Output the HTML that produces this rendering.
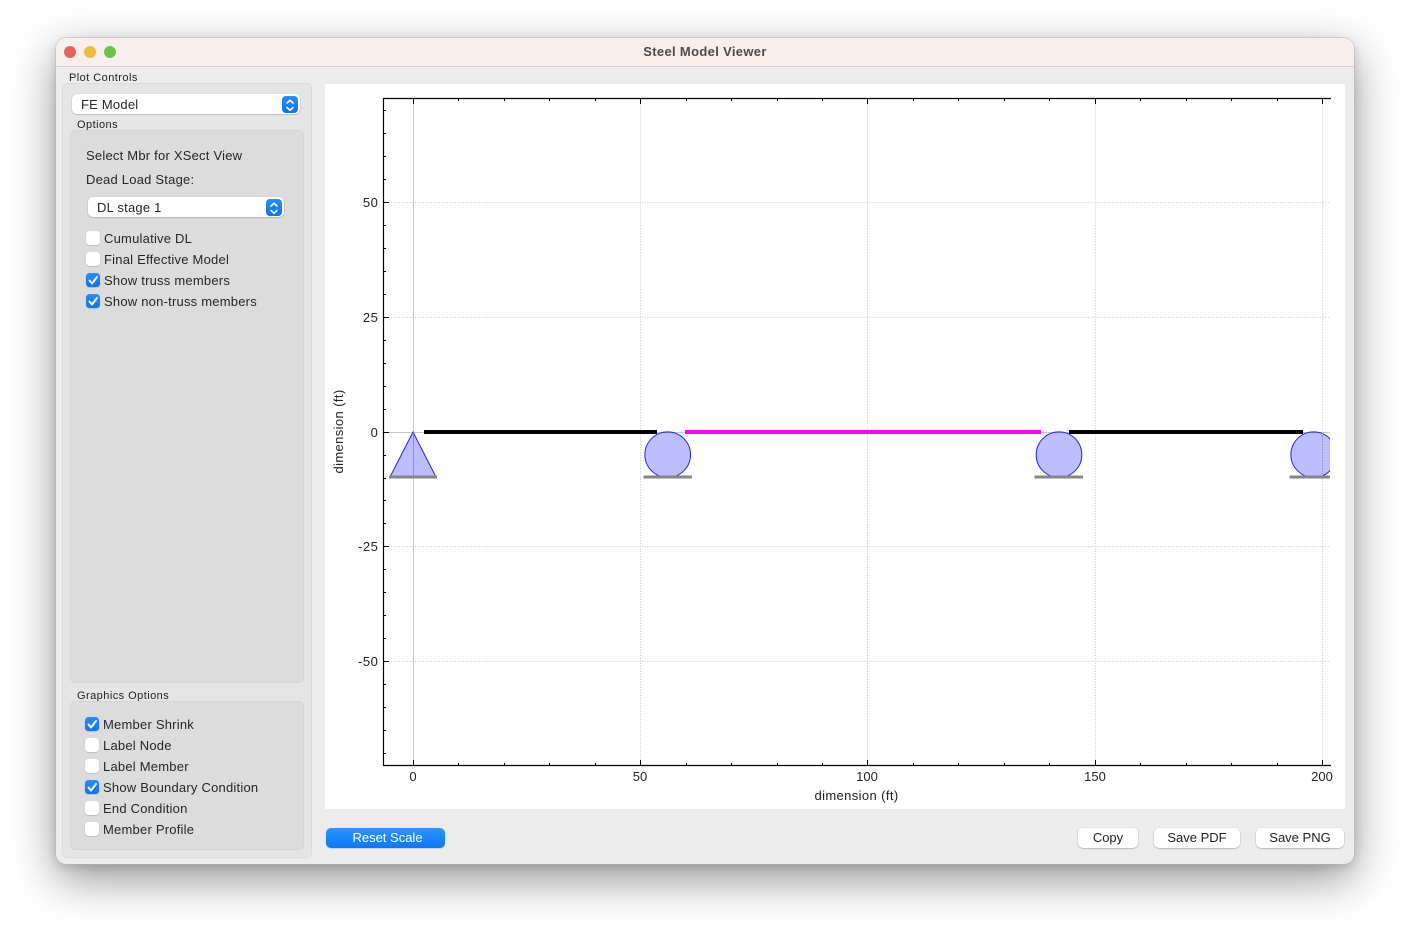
<!DOCTYPE html>
<html>
<head>
<meta charset="utf-8">
<style>
html,body{margin:0;padding:0;width:1410px;height:938px;background:#fff;overflow:hidden;font-family:"Liberation Sans",sans-serif;color:#222}
div,span{position:absolute;box-sizing:border-box}
#win{left:56px;top:38px;width:1298px;height:826px;border-radius:10px;background:#ececec;box-shadow:0 0 0 .5px #b5b5b5,0 15px 46px rgba(0,0,0,.42),0 3px 10px rgba(0,0,0,.14)}
#tbar{left:56px;top:38px;width:1298px;height:29px;border-radius:10px 10px 0 0;background:#f8eeec;border-bottom:1px solid #d2cfce}
#title{left:56px;width:1298px;top:44px;text-align:center;font-size:13px;font-weight:bold;color:#4c4a4a;line-height:15px;letter-spacing:.33px}
.dot{width:12px;height:12px;border-radius:50%;top:46px}
.t{font-size:13px;line-height:16px;white-space:nowrap;color:#262626;letter-spacing:.22px}
.s{font-size:11px;line-height:13px;white-space:nowrap;color:#222;letter-spacing:.45px}
.grp{border:1px solid #dadada;border-radius:5px}
.pop{background:#fff;border-radius:5px;height:20px;box-shadow:0 .5px 1.5px rgba(0,0,0,.3)}
.step{width:16px;height:17px;border-radius:4px;background:linear-gradient(#2a8dff,#0a74f5)}
.cb{width:14px;height:14px;border-radius:3.5px;background:#fff;box-shadow:0 .5px 1px rgba(0,0,0,.25)}
.cb.on{background:linear-gradient(#2a8dff,#0a74f5)}
.btn{height:20px;background:#fff;border-radius:5px;box-shadow:0 .5px 1.5px rgba(0,0,0,.38);text-align:center;font-size:13px;line-height:20px;color:#222}
svg{position:absolute;left:0;top:0}
</style>
</head>
<body>
<div id="win"></div>
<div id="tbar"></div>
<div class="dot" style="left:64px;background:#e5645a"></div>
<div class="dot" style="left:84px;background:#eebb3f"></div>
<div class="dot" style="left:104px;background:#6cc24a"></div>
<div id="title">Steel Model Viewer</div>

<div class="s" style="left:69px;top:72px">Plot Controls</div>
<div class="grp" style="left:62px;top:83px;width:250px;height:775px;background:#e5e5e5"></div>
<div class="pop" style="left:72px;top:94px;width:228px"></div>
<div class="t" style="left:81px;top:97px">FE Model</div>
<div class="step" style="left:282px;top:96px"></div>
<div class="s" style="left:77px;top:119px">Options</div>
<div class="grp" style="left:70px;top:130px;width:234px;height:553px;background:#dcdcdc;border-color:#d4d4d4"></div>
<div class="t" style="left:86px;top:148px">Select Mbr for XSect View</div>
<div class="t" style="left:86px;top:172px">Dead Load Stage:</div>
<div class="pop" style="left:88px;top:197px;width:196px"></div>
<div class="t" style="left:97px;top:200px">DL stage 1</div>
<div class="step" style="left:266px;top:199px"></div>

<div class="cb" style="left:86px;top:231px"></div><div class="t" style="left:104px;top:231px">Cumulative DL</div>
<div class="cb" style="left:86px;top:252px"></div><div class="t" style="left:104px;top:252px">Final Effective Model</div>
<div class="cb on" style="left:86px;top:273px"></div><div class="t" style="left:104px;top:273px">Show truss members</div>
<div class="cb on" style="left:86px;top:294px"></div><div class="t" style="left:104px;top:294px">Show non-truss members</div>

<div class="s" style="left:77px;top:690px">Graphics Options</div>
<div class="grp" style="left:70px;top:701px;width:234px;height:149px;background:#dcdcdc;border-color:#d4d4d4"></div>
<div class="cb on" style="left:85px;top:717px"></div><div class="t" style="left:103px;top:717px">Member Shrink</div>
<div class="cb" style="left:85px;top:738px"></div><div class="t" style="left:103px;top:738px">Label Node</div>
<div class="cb" style="left:85px;top:759px"></div><div class="t" style="left:103px;top:759px">Label Member</div>
<div class="cb on" style="left:85px;top:780px"></div><div class="t" style="left:103px;top:780px">Show Boundary Condition</div>
<div class="cb" style="left:85px;top:801px"></div><div class="t" style="left:103px;top:801px">End Condition</div>
<div class="cb" style="left:85px;top:822px"></div><div class="t" style="left:103px;top:822px">Member Profile</div>

<div style="left:325px;top:84px;width:1020px;height:725px;background:#fff"></div>

<div class="btn" style="left:326px;top:828px;width:119px;padding-left:4px;background:linear-gradient(#2c95ff,#0a78fb);color:#fff;box-shadow:0 .5px 1px rgba(0,0,0,.25)">Reset Scale</div>
<div class="btn" style="left:1078px;top:828px;width:60px">Copy</div>
<div class="btn" style="left:1154px;top:828px;width:86px">Save PDF</div>
<div class="btn" style="left:1256px;top:828px;width:88px">Save PNG</div>

<svg width="1410" height="938" viewBox="0 0 1410 938" style="font-family:'Liberation Sans',sans-serif">
<defs><clipPath id="c"><rect x="383" y="98" width="947" height="668"/></clipPath></defs>
<!-- stepper arrows -->
<g fill="none" stroke="#fff" stroke-width="1.6" stroke-linecap="round" stroke-linejoin="round">
<path d="M287 103l3-2.800 3 2.800M287 107.500l3 2.800 3-2.800"/>
<path d="M271 206l3-2.800 3 2.800M271 210.500l3 2.800 3-2.800"/>
</g>
<!-- check marks -->
<g fill="none" stroke="#fff" stroke-width="2" stroke-linecap="round" stroke-linejoin="round">
<path d="M89.500 280.500l2.500 3 5-6.500"/>
<path d="M89.500 301.500l2.500 3 5-6.500"/>
<path d="M88.500 724.500l2.500 3 5-6.500"/>
<path d="M88.500 787.500l2.500 3 5-6.500"/>
</g>
<!-- grid -->
<g stroke="#c8c8c8" stroke-width="1" stroke-dasharray="1 1.670" fill="none">
<path d="M391 202.500H1330M391 317.500H1330M391 546.500H1330M391 661.500H1330"/>
<path d="M640.500 105V760M867.500 105V760M1095.500 105V760M1322.500 105V760"/>
</g>
<path d="M413.500 103V760M389 432.500H1330" stroke="#c8c8c8" stroke-width="1" fill="none"/>
<!-- axes -->
<path d="M383.500 98.500H1331M383.500 98V766M383 765.500H1331" stroke="#000" stroke-width="1.200" fill="none"/>
<!-- major ticks -->
<path d="M413.500 98v6M640.500 98v6M867.500 98v6M1095.500 98v6M1322.500 98v6M413.500 766v-6M640.500 766v-6M867.500 766v-6M1095.500 766v-6M1322.500 766v-6M383 202.500h6M383 317.500h6M383 432.500h6M383 546.500h6M383 661.500h6" stroke="#000" stroke-width="1" fill="none"/>
<!-- minor ticks -->
<path d="M458.500 98v3M504.500 98v3M549.500 98v3M595.500 98v3M686.500 98v3M731.500 98v3M777.500 98v3M822.500 98v3M913.500 98v3M958.500 98v3M1004.500 98v3M1049.500 98v3M1140.500 98v3M1186.500 98v3M1231.500 98v3M1277.500 98v3M458.500 766v-3M504.500 766v-3M549.500 766v-3M595.500 766v-3M686.500 766v-3M731.500 766v-3M777.500 766v-3M822.500 766v-3M913.500 766v-3M958.500 766v-3M1004.500 766v-3M1049.500 766v-3M1140.500 766v-3M1186.500 766v-3M1231.500 766v-3M1277.500 766v-3M383 110.500h3M383 133.500h3M383 156.500h3M383 179.500h3M383 225.500h3M383 248.500h3M383 271.500h3M383 294.500h3M383 340.500h3M383 363.500h3M383 386.500h3M383 409.500h3M383 455.500h3M383 478.500h3M383 500.500h3M383 523.500h3M383 569.500h3M383 592.500h3M383 615.500h3M383 638.500h3M383 684.500h3M383 707.500h3M383 730.500h3M383 753.500h3" stroke="#000" stroke-width="1" fill="none"/>
<!-- members -->
<rect x="424" y="430" width="233" height="4" fill="#000"/>
<rect x="685" y="430" width="356" height="4" fill="#f0f"/>
<rect x="1069" y="430" width="234" height="4" fill="#000"/>
<!-- supports -->
<g clip-path="url(#c)">
<g fill="#0000ff" fill-opacity=".26" stroke="#2222ee" stroke-width="1">
<path d="M413 432L436 477H390Z"/>
<circle cx="667.700" cy="454.700" r="22.800"/>
<circle cx="1059" cy="454.700" r="22.800"/>
<circle cx="1313.700" cy="454.700" r="22.800"/>
</g>
<g fill="#868686">
<rect x="389" y="475.500" width="48" height="3"/>
<rect x="643.500" y="475.500" width="48.500" height="3"/>
<rect x="1034.500" y="475.500" width="48.500" height="3"/>
<rect x="1289.500" y="475.500" width="41" height="3"/>
</g>
</g>
<path d="M413.500 432V477" stroke="#8a8ab0" stroke-opacity=".5" stroke-width="1"/>
<path d="M1322.500 433V476" stroke="#8a8ab0" stroke-dasharray="1 1.670" stroke-width="1"/>
<!-- labels -->
<g font-size="13" fill="#222" text-anchor="end" letter-spacing=".6">
<text x="378.500" y="207">50</text>
<text x="378.500" y="322">25</text>
<text x="378.500" y="437">0</text>
<text x="378.500" y="551">-25</text>
<text x="378.500" y="666">-50</text>
</g>
<g font-size="13" fill="#222" text-anchor="middle">
<text x="413" y="781">0</text>
<text x="640" y="781">50</text>
<text x="867" y="781">100</text>
<text x="1095" y="781">150</text>
<text x="1322" y="781">200</text>
<text x="856.500" y="800" letter-spacing=".38">dimension (ft)</text>
<text transform="translate(343 431.500) rotate(-90)" letter-spacing=".38">dimension (ft)</text>
</g>
</svg>
</body>
</html>
